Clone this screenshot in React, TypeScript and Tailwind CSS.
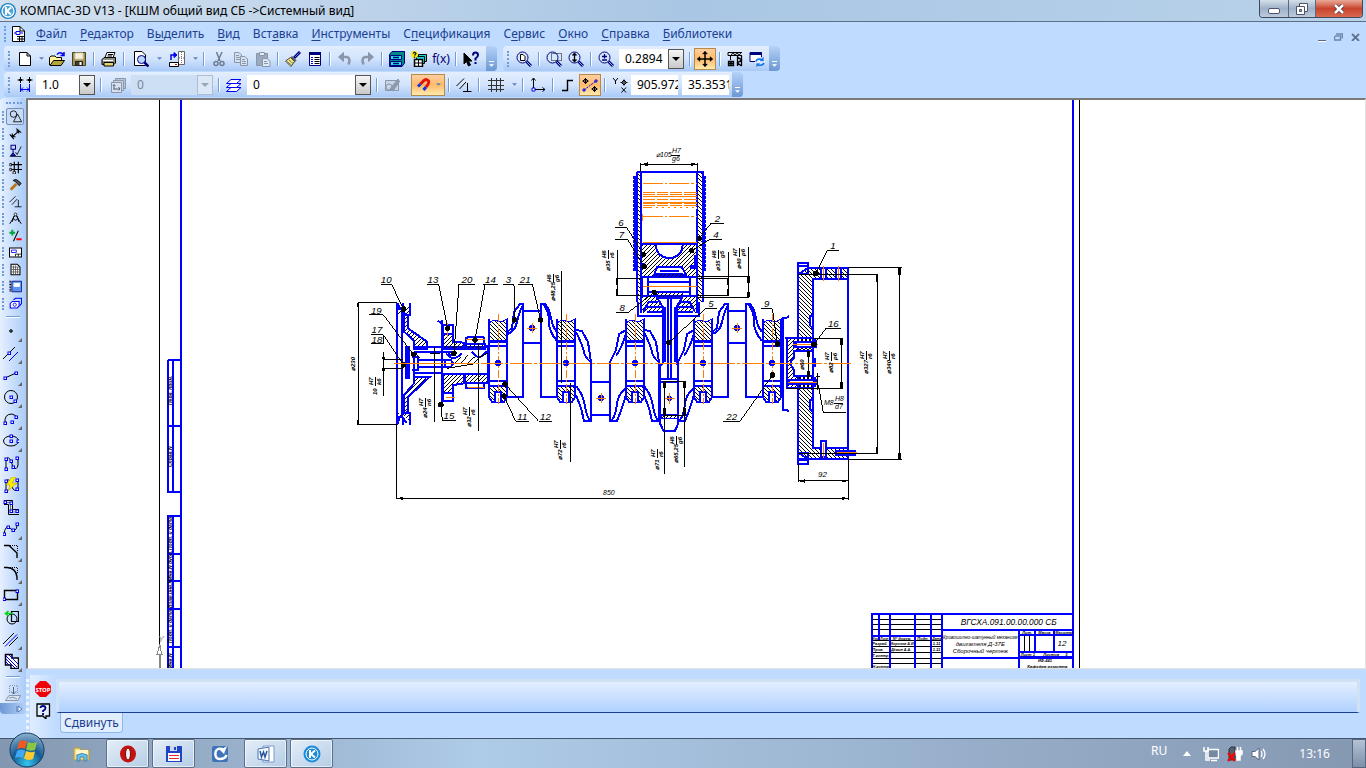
import type { ReactNode } from "react";

/* ---------- icons, all on a 16x16 grid ---------- */

type LineProps = { d: string; c?: string; f?: string; w?: number; dash?: string };

function L({ d, c = "#000", f = "none", w = 1, dash }: LineProps) {
  return <path d={d} stroke={c} fill={f} strokeWidth={w} strokeDasharray={dash} />;
}

const BLUE = "#0000f0";
const NAVY = "#00007c";
const GRAY = "#8a97ab";

const lens = (
  <>
    <L d="M10.5 10.5L15 15" c={NAVY} w={3} />
    <L d="M11 11L15 15" c="#8ab4f0" w={1} />
    <circle cx="6.5" cy="6.5" r="5.5" fill="#d6e8ff" stroke={NAVY} />
  </>
);

const node = (x: number, y: number) => (
  <rect key={`${x}-${y}`} x={x - 1} y={y - 1} width="2.5" height="2.5" fill="#fff" stroke={BLUE} />
);

const icons: Record<string, ReactNode> = {
  compass: (
    <>
      <circle cx="8" cy="8" r="8" fill="#1b7fc4" />
      <circle cx="8" cy="8" r="6" fill="#4aa8e0" stroke="#fff" strokeWidth="1.3" />
      <L d="M6 4V12M11 4.5L7 8L11 11.5" c="#fff" w={2} />
    </>
  ),
  sheet: (
    <>
      <L d="M2.5.5H10L14.5 5V15.5H2.5Z" f="#fff" />
      <L d="M10 .5V5H14.5M7 10.5H14M7 13H14M9.5 10V15M12 10V15" />
      <L d="M4 7H6M10.5 7H13M6 5.5H10V8.5H6Z" c={BLUE} />
    </>
  ),
  newDoc: <L d="M2.5 1.5H10L13.5 5V14.5H2.5ZM10 1.5V5H13.5" f="#fff" />,
  open: (
    <>
      <L d="M.5 14V6.5L2 5H6L7.5 6.5H12.5V9" f="#fff59a" />
      <L d="M1 14.5L4.5 9.5H15.5L12 14.5Z" f="#b5a63c" />
      <L d="M8 3.5Q11 0 14.5 3.5M15 1V4.5H11.5" c={BLUE} w={1.5} />
    </>
  ),
  save: (
    <>
      <L d="M1.5 1.5H14.5V14.5H1.5Z" f="#a5935a" c="#4a4127" />
      <L d="M4 2H12V8H4Z" f="#f6f2de" c="#d8cfa6" />
      <L d="M4.5 10.5H11.5V14.5H4.5Z" f="#443c28" c="#222" />
      <L d="M9.5 11V14" c="#fff" w={2} />
    </>
  ),
  print: (
    <>
      <L d="M4 6.5L6 1.5H14L12 6.5Z" f="#fff" />
      <L d="M7 3.5H12M6.5 5H11" />
      <L d="M1 8.5L3 6.5H14.5V12L13 13.5H1Z" f="#8c8c80" />
      <L d="M3 11.5H12.5V15H3Z" f="#e6d66a" />
      <L d="M2 9.5H12" c="#fff" />
    </>
  ),
  preview: (
    <>
      <L d="M1.5 .5H9L12.5 4V14.5H1.5Z" f="#fff" />
      <L d="M11 11L15.5 15.5" c={NAVY} w={2.5} />
      <circle cx="8.5" cy="8.5" r="4" fill="#bcd8ff" stroke={NAVY} />
    </>
  ),
  convert: (
    <>
      <L d="M9.5.5H15.5V13.5H9.5Z" f="#fff" c="#666" />
      <L d="M12.5 1V13M10 7H15" c="#777" dash="1 1" />
      <L d="M.5 11.5H9.5V15.5H.5Z" f="#fff" />
      <L d="M2 9V4H6" c={BLUE} w={1.5} />
      <L d="M5 1.5L8 4L5 6.5Z" c={BLUE} f={BLUE} />
      <L d="M6 13.5H8" c="#e00" />
    </>
  ),
  cut: (
    <>
      <L d="M5.5 1L9 10M11 1L7 10" c="#6e7c92" w={1.5} />
      <circle cx="5" cy="12.5" r="2" fill="none" stroke="#6e7c92" strokeWidth="1.5" />
      <circle cx="11" cy="12.5" r="2" fill="none" stroke="#6e7c92" strokeWidth="1.5" />
    </>
  ),
  copy: (
    <>
      <L d="M1.5 1.5H6L8.5 4V11.5H1.5Z" c={GRAY} f="#d5e0f0" />
      <L d="M3 4.5H6M3 6.5H7M3 8.5H7" c={GRAY} />
      <L d="M7.5 5.5H12L14.5 8V14.5H7.5Z" c={GRAY} f="#d5e0f0" />
      <L d="M9 8.5H12M9 10.5H13M9 12.5H13" c={GRAY} />
    </>
  ),
  paste: (
    <>
      <L d="M1.5 2.5H12.5V14.5H1.5Z" c={GRAY} f="#9aa9bf" />
      <L d="M4.5 1.5H9.5V4.5H4.5Z" c={GRAY} f="#e5edf8" />
      <L d="M7.5 7.5H12L15 10V15.5H7.5Z" c={GRAY} f="#dfe9f6" />
      <L d="M9 10.5H12M9 12.5H13" c={GRAY} />
    </>
  ),
  brush: (
    <>
      <L d="M9 7L15 1" c={NAVY} w={3} />
      <L d="M10 6L14.5 1.5" c="#3f7be0" w={1} />
      <L d="M6 6L10.5 10.5" c="#606060" w={3} />
      <L d="M5.5 6.5L.5 10L6 15.5L9.5 10.5Z" f="#f4e97a" c="#444" />
      <L d="M2 10.5L6.5 14M4 9L8 12.5" c="#777" />
    </>
  ),
  list: (
    <>
      <L d="M2.5 1.5H13.5V14.5H2.5Z" f="#fff" c={NAVY} />
      <L d="M2 2.5H14" c={NAVY} w={3} />
      <L d="M4 6.5H6M4 8.5H6M4 10.5H6M4 12.5H6" c={BLUE} />
      <L d="M7.5 6.5H12.5M7.5 8.5H12.5M7.5 10.5H12.5M7.5 12.5H12.5" />
    </>
  ),
  undo: (
    <>
      <L d="M5 6H10Q14 7 11.5 13.5" c={GRAY} w={2.5} />
      <L d="M6.5 1.5V10.5L1.5 6Z" c={GRAY} f={GRAY} />
    </>
  ),
  redo: (
    <>
      <L d="M11 6H6Q2 7 4.5 13.5" c={GRAY} w={2.5} />
      <L d="M9.5 1.5V10.5L14.5 6Z" c={GRAY} f={GRAY} />
    </>
  ),
  cabinet: (
    <>
      <L d="M.5 3.5L3 .5H15.5V12L13 15.5H.5Z" f="#008b8b" c={NAVY} />
      <L d="M1.5 4.5H12.5V8.5H1.5ZM1.5 10.5H12.5V14.5H1.5Z" f="#22e5e5" c={NAVY} />
      <L d="M4 6.5H10M4 12.5H10" c={NAVY} w={1.5} />
    </>
  ),
  vars: (
    <>
      <L d="M7.5 3.5H15.5V10.5H7.5Z" f="#20d8d8" />
      <L d="M5.5 5.5H13.5V12.5H5.5Z" f="#20d8d8" />
      <L d="M3.5 8.5H11.5V15.5H3.5Z" f="#fff" w={1.5} />
      <L d="M3.5 12H11.5M7.5 8.5V15.5" />
      <circle cx="3.5" cy="3.5" r="3.5" fill="#ffee00" />
      <L d="M2 2.5Q3.5 0 5 2.5L3.5 4.5M3.5 5.5V7" c="#222" w={1.3} />
    </>
  ),
  cursorHelp: (
    <>
      <L d="M1 2V13L3.5 10.5L5.5 15L7.5 14L5.5 10H9Z" f="#000" />
      <L d="M10 4.5Q10 1.5 12.5 1.5Q15 1.5 15 4Q15 6 12.5 7.5V9.5M12.5 11V13" c={NAVY} w={2} />
    </>
  ),
  zoomPage: (
    <>
      {lens}
      <L d="M4.5 3.5H7L9 5.5V9.5H4.5Z" f="#fff" />
    </>
  ),
  zoomWin: (
    <>
      {lens}
      <L d="M5.5 2.5H15.5V9.5H5.5Z" dash="1 1" />
    </>
  ),
  zoomMove: (
    <>
      {lens}
      <L d="M6.5 2.5V10.5M4.5 4.5L6.5 2.5L8.5 4.5M4.5 8.5L6.5 10.5L8.5 8.5" w={1.3} />
    </>
  ),
  zoomScale: (
    <>
      {lens}
      <L d="M6.5 3V7.5M4 5.5H9M4 9H9" c={NAVY} w={1.3} />
    </>
  ),
  pan: (
    <>
      <L d="M8 1V15M1 8H15" w={1.5} />
      <L
        d="M8 0L5.5 3H10.5ZM8 16L5.5 13H10.5ZM0 8L3 5.5V10.5ZM16 8L13 5.5V10.5Z"
        f="#000"
        w={0.3}
      />
    </>
  ),
  crane: (
    <>
      <L d="M1 1.5H15M1 4.5H15M1 1.5V4.5M4 4.5L6 1.5L8 4.5L10 1.5L12 4.5L14 1.5M3.5 5V9" />
      <L d="M10.5 5V15M14.5 5V15M10.5 6L14.5 9L10.5 12L14.5 15" w={1.3} />
      <L d="M1.5 10.5H6.5V14.5H1.5ZM1.5 12.5H6.5M4 10.5V14.5" w={1.3} />
    </>
  ),
  refresh: (
    <>
      <L d="M1 1.5H12.5V10.5H1Z" f="#fff" c={NAVY} />
      <L d="M1 2.5H12.5" c={NAVY} w={3} />
      <circle cx="11" cy="11" r="5" fill="#dfeaff" />
      <L d="M7 10.5Q8 7 13 8.5M15 12Q13 15.5 9 14" c="#1676e8" w={1.8} />
      <L d="M14.5 6V10H11ZM7.5 16V12.5H11Z" c="#1676e8" f="#1676e8" w={0.3} />
    </>
  ),
  dimStep: (
    <>
      <L d="M3.5 0V6M.5 3H6.5M12.5 0V6M9.5 3H15.5M2 3L3.5 1.5L5 3L3.5 4.5ZM11 3L12.5 1.5L14 3L12.5 4.5Z" />
      <L d="M3.5 7V15M12.5 7V15M4 12.5H12M6 10.5L4 12.5L6 14.5M10 10.5L12 12.5L10 14.5" c={BLUE} />
    </>
  ),
  stateOff: (
    <>
      <L d="M5.5 1.5H15.5V11.5H5.5Z" c={GRAY} f="#b8c5d8" />
      <L d="M3.5 3.5H13.5V13.5H3.5Z" c={GRAY} f="#c8d4e4" />
      <L d="M1.5 5.5H11.5V15.5H1.5Z" c={GRAY} f="#d6e0ee" />
      <L d="M4 13V8M4 12H10M3 9L4 7.5L5.5 9M8.5 10L10 12L8.5 13.5" c="#56657c" />
    </>
  ),
  layers: (
    <>
      <L d="M.5 14.5L5 10.5H15L10.5 14.5Z" f="#fff" c={BLUE} />
      <L d="M.5 10.5L5 6.5H15L10.5 10.5Z" f="#fff" c={BLUE} />
      <L d="M.5 6.5L5 2.5H15L10.5 6.5Z" f="#fff" c={BLUE} />
    </>
  ),
  editOff: (
    <>
      <L d="M1.5 3.5H14.5V13.5H1.5Z" c={GRAY} f="#c9d6e8" />
      <circle cx="5" cy="10" r="3" fill="none" stroke={GRAY} />
      <L d="M6 12L14 2L15.5 4.5L9 14Z" c={GRAY} f="#8d9aae" />
    </>
  ),
  magnet: (
    <>
      <L d="M4.500 7L8 3.500Q11 1.500 12.500 4Q13.500 6 10 10" c="#e3120b" w={3} />
      <L d="M4.500 7L2 9.500M10 10L7.500 13" c="#1238e0" w={3} />
    </>
  ),
  parallel: <L d="M.5 9L8 1.5M3.5 12L10 5M11.5 6V14.5M7 14.5H15.5" />,
  grid: <L d="M3.5 1V15M8.5 1V15M12.5 1V15M0 3.5H16M0 8.5H16M0 12.5H16" c="#333" />,
  axes: (
    <>
      <L d="M3.5 1V12.5H15M1.5 3.5L3.5 1L5.5 3.5M12.5 10.5L15 12.5L12.5 14.5" />
      <L d="M2 11H5V14H2Z" c={BLUE} f="#fff" />
    </>
  ),
  ortho: <L d="M2 13.5H7.5V3.5H13" w={1.4} />,
  snap: (
    <>
      <L d="M3.5 1V7M.5 4H6.5M12.5 9V15M9.5 12H15.5M1 4L3.5 1.5L6 4L3.5 6.5ZM10 12L12.5 9.5L15 12L12.5 14.5Z" />
      <L d="M2 13L14 4" c={BLUE} dash="2 1" />
      <L d="M1 12H3V14H1ZM13 3H15V5H13Z" c={BLUE} />
    </>
  ),
  xy: (
    <>
      <L d="M1 1L3.5 4L6 1M3.5 4V7M8.5 5.5H15.5M12 2.5V8.5" />
      <L d="M9.5 5.5L12 3L14.5 5.5L12 8Z" f="#555" />
      <L d="M9.5 10.5L14 15.5M14 10.5L9.5 15.5" />
    </>
  ),
  geometry: (
    <>
      <circle cx="5.5" cy="5" r="4" fill="none" stroke="#000" />
      <L d="M10.5 5L15.5 14.5H5.5Z" />
    </>
  ),
  dims: <L d="M1 9L6 15M9 2L15 7M4 12L12 5M4 8V12H8M9 5H12V8" w={1.3} />,
  marks: (
    <>
      <L d="M2.5 1.5H8V6.5H2.5ZM5 6.5V13M2.5 14H7.5L5 11Z" c={NAVY} w={1.3} />
      <L d="M8 10L10 13L15 3M1 15.5H15" />
    </>
  ),
  build: (
    <>
      <L d="M6.5 1V15M11.5 1V15M3 4.5H16M3 10.5H16" w={1.4} />
      <L d="M1 3H3V6H1ZM1 9H3V12H1ZM5 13H8V16H5Z" f="#fff" />
    </>
  ),
  hammer: (
    <>
      <L d="M2 14.5L9 7.5" c="#b77417" w={3.5} />
      <L d="M5 3Q9 0 12 4L15 6.5L12.5 9.5L8 4.5Z" f="#555" />
    </>
  ),
  dividers: (
    <>
      <L d="M8 3L1 14.5M8 3L15 14.5M5 8Q8 12 11 8M6 5L4 12M10 5L12 12" w={1.2} />
      <circle cx="8" cy="3" r="1.7" fill="#fff" stroke="#000" />
    </>
  ),
  plusMinus: (
    <>
      <L d="M4 1V8M.5 4.5H7.5" c="#00a63c" w={2.4} />
      <L d="M11.5 2L5.5 15" w={1.3} />
      <L d="M9 12.5H15.5" c="#f00" w={2.4} />
    </>
  ),
  specA: (
    <>
      <L d="M.5 2.5H15.5V13.5H.5Z" f="#fff" w={1.4} />
      <L d="M3 5H9V8H3Z" c={BLUE} />
      <L d="M8 13V10H15M11.5 10V13" />
    </>
  ),
  specB: (
    <>
      <L d="M2.5 1.5H10L13.5 5V14.5H2.5Z" f="#fff" w={1.3} />
      <L d="M5.5 3V14M8 3V14M10.5 5V14M3 5H13M3 8H13M3 11H13" c="#555" />
    </>
  ),
  specC: (
    <>
      <L d="M3.5 1.5H15.5V14.5H3.5Z" f="#5d94f0" c={NAVY} />
      <L d="M6 4H13V8H6Z" f="#fff" c="#fff" />
      <L d="M1.5 1V15" w={2} dash="1 1" />
    </>
  ),
  fragment: (
    <>
      <L d="M5.5 3.5L8 1.5H15.5V8L13 11" c={BLUE} w={1.3} />
      <L d="M1.5 8L4 5.5H12.5V11L10 13.5H1.5Z" c={BLUE} f="#fff" w={1.3} />
      <circle cx="7" cy="9.5" r="2" fill="none" stroke={BLUE} />
    </>
  ),
  point: <circle cx="8" cy="8" r="1.3" fill="#777" stroke="#000" />,
  lineTool: (
    <>
      <L d="M0 14L12 2" />
      <L d="M6 16L15 7" c={BLUE} />
      {node(6, 8)}
    </>
  ),
  segment: (
    <>
      <L d="M2 11L13 6" />
      {node(2, 11)}
      {node(13, 6)}
    </>
  ),
  circle: (
    <>
      <circle cx="8" cy="8" r="6.5" fill="none" stroke="#000" />
      {node(8, 8)}
      {node(12, 12)}
    </>
  ),
  arc: (
    <>
      <L d="M2 12Q1 3 9 3Q13 4 14 7" />
      {node(2, 12)}
      {node(13, 6)}
      {node(9, 11)}
    </>
  ),
  ellipse: (
    <>
      <ellipse cx="8" cy="8" rx="7.5" ry="5" fill="none" stroke="#000" />
      {node(8, 8)}
      {node(8, 3)}
      {node(15, 8)}
    </>
  ),
  bezier: (
    <>
      <L d="M3 14V5Q5 0 8 6L10 12Q14 16 15 10V3" />
      {[node(3, 14), node(3, 4), node(8, 6), node(14, 3), node(10, 12)]}
    </>
  ),
  bolt: (
    <>
      <L d="M3 14V5Q5 0 8 6L10 12Q14 16 15 10V3" />
      {[node(3, 14), node(3, 4), node(14, 3), node(14, 12)]}
      <L d="M9 0L3 8H7L5 14L14 6H9L13 0Z" f="#ffee00" c="#b79b00" w={0.6} />
    </>
  ),
  polyline: (
    <>
      <L d="M1 1.5H9.5V10.5H16M1 5.5H5.5V15.5H16" />
      <L d="M2 3.5H7.5V13H15" c="#777" />
      {[node(2, 3), node(8, 4), node(8, 12), node(14, 12)]}
    </>
  ),
  spline: (
    <>
      <L d="M1 13Q2 5 6 6Q9 10 12 9Q14 8 14 4" />
      {[node(1, 13), node(5, 6), node(10, 9), node(14, 3)]}
    </>
  ),
  chamfer: (
    <>
      <L d="M1 2.5H6L14 10V15" w={1.4} />
      <L d="M7 2.5H14.5V9" dash="1 1" />
    </>
  ),
  fillet: (
    <>
      <L d="M1 2.5H4Q13 3 14 12V15" w={1.4} />
      <L d="M7 2.5H14.5V9" dash="1 1" />
    </>
  ),
  rectangle: (
    <>
      <L d="M1.5 3.5H14.5V12.5H1.5Z" w={1.4} />
      {node(1, 12)}
      {node(14, 4)}
    </>
  ),
  contour: (
    <>
      <L d="M8.5 2.5H15.5V12.5H8.5Z" w={1.2} />
      <circle cx="9" cy="10" r="5" fill="none" stroke="#000" />
      <L d="M10 4.5H3M5.5 2L2.5 4.5L5.5 7" c="#00d31b" w={1.6} />
    </>
  ),
  hatchLines: (
    <>
      <L d="M0 13L11 2M6 15L15 6" />
      <L d="M2 15.5L14 3.5" c={BLUE} />
    </>
  ),
  hatch: (
    <>
      <L d="M2.5 1.5H9V5H15.5V15.5H8V12H2.5Z" f="#fff" w={1.5} />
      <L d="M3 3L14 14M6 2L15 11M3 6L12 15M3 9L6 12" c={BLUE} />
    </>
  ),
  solidOff: (
    <>
      <L d="M4.5 8V.5H12.5V8" c={GRAY} dash="1 1" />
      <L d="M8.5 2V9M6 6.5L8.5 9L11 6.5" c="#56657c" />
      <L d="M.5 15.5L4 10.5H15.5L13 15.5ZM4 13Q8 11 12 14" c={GRAY} f="#d9e4f3" />
    </>
  ),
  stop: (
    <>
      <L d="M5 0H11L16 5V11L11 16H5L0 11V5Z" f="#f00008" c="none" />
      <text x="8" y="10.5" textAnchor="middle" className="fill-white text-[6px] font-bold">
        STOP
      </text>
    </>
  ),
  ask: (
    <>
      <L d="M2 1H14.5V13H11V16L8 13H2Z" f="#e6f1ff" w={1.3} />
      <L d="M5.5 5Q5.5 3 8 3Q10.5 3 10.5 5Q10.5 6.500 8 8V9M8 10V12" c={NAVY} w={1.8} />
    </>
  ),
};

function Icon({ name, className = "size-4" }: { name: string; className?: string }) {
  return (
    <svg viewBox="0 0 16 16" className={`${className} shrink-0`} aria-hidden="true">
      {icons[name]}
    </svg>
  );
}

/* ---------- toolbar parts ---------- */

function Tool({ icon, title }: { icon: string; title: string }) {
  return (
    <button type="button" title={title} className="flex h-6 w-[22px] shrink-0 items-center justify-center">
      <Icon name={icon} />
    </button>
  );
}

function WideTool({ icon, title }: { icon: string; title: string }) {
  return (
    <button type="button" title={title} className="flex h-6 w-[26px] shrink-0 items-center justify-center">
      <Icon name={icon} />
    </button>
  );
}

function ActiveTool({ icon, title, arrow = false }: { icon: string; title: string; arrow?: boolean }) {
  return (
    <button
      type="button"
      title={title}
      className={`flex h-[22px] shrink-0 items-center justify-center gap-1 border border-[#b58a4c] bg-linear-to-b from-[#ffcf9e] via-[#ffba68] to-[#ffeaae] ${arrow ? "w-[34px]" : "w-[22px]"}`}
    >
      <Icon name={icon} />
      {arrow && <Caret />}
    </button>
  );
}

function Caret() {
  return (
    <svg viewBox="0 0 6 3" className="h-[3px] w-[5px] shrink-0" aria-hidden="true">
      <path d="M0 0H6L3 3Z" fill="#5d82b8" />
    </svg>
  );
}

function Drop() {
  return (
    <span className="flex w-2.5 shrink-0 items-center justify-center">
      <Caret />
    </span>
  );
}

function Sep() {
  return (
    <span className="flex w-2 shrink-0 justify-center">
      <span className="h-3.5 w-0.5 border-r border-white bg-[#6f9dd9]" />
    </span>
  );
}

function Grip() {
  return <span className="mx-1 h-4 w-0 shrink-0 border-l-2 border-dotted border-[#6f9dd9]" />;
}

function Cap() {
  return (
    <span className="ml-auto flex w-[11px] shrink-0 flex-col items-center justify-end gap-0.5 self-stretch rounded-r bg-linear-to-b from-[#b5d2f8] to-[#6c98d4] pb-1">
      <span className="h-px w-[5px] bg-white" />
      <svg viewBox="0 0 6 3" className="h-[3px] w-[5px]" aria-hidden="true">
        <path d="M0 0H6L3 3Z" fill="#fff" />
      </svg>
    </span>
  );
}

function Strip({ className, children }: { className: string; children: ReactNode }) {
  return (
    <div
      className={`flex h-[25px] shrink-0 items-center rounded bg-linear-to-b from-[#e3eefe] via-[#d3e4fc] to-[#a9c9f6] ${className}`}
    >
      {children}
    </div>
  );
}

function Combo({ label, value, className, disabled = false }: { label: string; value: string; className: string; disabled?: boolean }) {
  return (
    <label className={`flex h-5 shrink-0 ${disabled ? "bg-[#cddff5] text-[#7d8794]" : "bg-white text-black"} ${className}`}>
      <select
        aria-label={label}
        disabled={disabled}
        className="min-w-0 flex-1 appearance-none pl-1.5 text-[12px] leading-5 outline-none"
      >
        <option>{value}</option>
      </select>
      <span
        className={`flex w-4 items-center justify-center border ${disabled ? "border-[#aebdd0] bg-[#dde8f6]" : "border-[#555] bg-linear-to-b from-[#f6f6f6] to-[#c9c9c9]"}`}
      >
        <svg viewBox="0 0 8 4" className="h-1 w-2" aria-hidden="true">
          <path d="M0 0H8L4 4Z" fill={disabled ? "#9aa7b8" : "#000"} />
        </svg>
      </span>
    </label>
  );
}

const menu = [
  ["", "Ф", "айл"],
  ["", "Р", "едактор"],
  ["В", "ы", "делить"],
  ["", "В", "ид"],
  ["Вст", "а", "вка"],
  ["", "И", "нструменты"],
  ["С", "п", "ецификация"],
  ["С", "е", "рвис"],
  ["", "О", "кно"],
  ["", "С", "правка"],
  ["", "Б", "иблиотеки"],
];

function TitleBar() {
  return (
    <header className="flex h-[22px] shrink-0 items-start justify-between border-b border-[#5d6f86] bg-linear-to-r from-[#d3e1f0] via-[#a9c6e4] to-[#b9d2ea]">
      <div className="flex h-[21px] items-center gap-1 pr-6">
        <Icon name="compass" />
        <h1 className="text-[12px] leading-5 text-black">КОМПАС-3D V13 - [КШМ общий вид СБ -&gt;Системный вид]</h1>
      </div>
      <div className="mr-[3px] flex h-[18px] overflow-hidden rounded-b border border-t-0 border-[#3e4a5a]">
        <button type="button" title="Свернуть" className="flex w-7 items-center justify-center bg-linear-to-b from-[#d5dfea] via-[#9fb2c8] to-[#bccbdc]">
          <span className="mt-1 h-1.5 w-3 rounded-xs border border-[#4b5468] bg-white" />
        </button>
        <button type="button" title="Развернуть" className="flex w-7 items-center justify-center border-x border-[#5d6a7d] bg-linear-to-b from-[#d5dfea] via-[#9fb2c8] to-[#bccbdc]">
          <svg viewBox="0 0 12 12" className="size-3" aria-hidden="true">
            <path d="M3.500.5H11.500V8.500H3.500Z" fill="#fff" stroke="#4b5468" />
            <path d="M.5 3.500H8.500V11.500H.5Z" fill="#fff" stroke="#4b5468" />
            <path d="M3.500 6.500H5.500V8.500H3.500Z" fill="#9fb2c8" stroke="#4b5468" />
          </svg>
        </button>
        <button type="button" title="Закрыть" className="flex w-[46px] items-center justify-center bg-linear-to-b from-[#e9a898] via-[#c8432c] to-[#d9694f]">
          <svg viewBox="0 0 12 10" className="h-2.5 w-3" aria-hidden="true">
            <path d="M2 1L10 9M10 1L2 9" stroke="#4b3038" strokeWidth="4" />
            <path d="M2 1L10 9M10 1L2 9" stroke="#fff" strokeWidth="2.500" />
          </svg>
        </button>
      </div>
    </header>
  );
}

function MenuBar() {
  return (
    <nav className="flex h-6 shrink-0 items-center pr-1.5">
      <Grip />
      <Icon name="sheet" />
      <ul className="ml-2.5 flex gap-[13px] text-[12px] leading-5 text-[#1c3f8f]">
        {menu.map(([a, key, b]) => (
          <li key={a + key + b}>
            <button type="button">
              {a}
              <u className="underline-offset-2">{key}</u>
              {b}
            </button>
          </li>
        ))}
      </ul>
      <div className="ml-auto flex items-center gap-2 pt-1.5">
        <button type="button" title="Свернуть документ" className="flex h-2.5 w-2 items-end">
          <span className="h-0.5 w-2 border-b border-white bg-[#5a6a82]" />
        </button>
        <button type="button" title="Восстановить документ">
          <svg viewBox="0 0 9 8" className="h-2 w-[9px]" aria-hidden="true">
            <path d="M2 1H8.500V5.500M1 3H6.500V7H.500V3" fill="none" stroke="#6f87ab" strokeWidth="1.500" />
          </svg>
        </button>
        <button type="button" title="Закрыть документ">
          <svg viewBox="0 0 9 8" className="h-2 w-[9px]" aria-hidden="true">
            <path d="M1 1L8 8M8 1L1 8" stroke="#5f7391" strokeWidth="1.800" />
          </svg>
        </button>
      </div>
    </nav>
  );
}

function Toolbars() {
  return (
    <div className="flex h-[52px] shrink-0 flex-col gap-px pl-1">
      <div className="flex gap-1.5">
        <Strip className="w-[493px]">
          <Grip />
          <Tool icon="newDoc" title="Новый" />
          <Drop />
          <Tool icon="open" title="Открыть" />
          <Tool icon="save" title="Сохранить" />
          <Sep />
          <Tool icon="print" title="Печать" />
          <Sep />
          <WideTool icon="preview" title="Предварительный просмотр" />
          <Drop />
          <WideTool icon="convert" title="Преобразовать" />
          <Drop />
          <Sep />
          <Tool icon="cut" title="Вырезать" />
          <Tool icon="copy" title="Копировать" />
          <Tool icon="paste" title="Вставить" />
          <Sep />
          <Tool icon="brush" title="Копировать свойства" />
          <Tool icon="list" title="Свойства" />
          <Sep />
          <Tool icon="undo" title="Отменить" />
          <Tool icon="redo" title="Повторить" />
          <Sep />
          <Tool icon="cabinet" title="Менеджер библиотек" />
          <Tool icon="vars" title="Менеджер документа" />
          <button type="button" className="w-[22px] text-[12px] leading-5 text-[#00007c]">
            f(x)
          </button>
          <Sep />
          <Tool icon="cursorHelp" title="Справка" />
          <Cap />
        </Strip>
        <Strip className="w-[277px]">
          <Grip />
          <Tool icon="zoomPage" title="Показать все" />
          <Sep />
          <Tool icon="zoomWin" title="Увеличить рамкой" />
          <Tool icon="zoomMove" title="Приблизить" />
          <Sep />
          <Tool icon="zoomScale" title="Масштаб" />
          <Combo label="Текущий масштаб" value="0.2894" className="mx-0.5 w-[65px]" />
          <Sep />
          <ActiveTool icon="pan" title="Сдвинуть" />
          <Sep />
          <Tool icon="crane" title="Перестроить" />
          <Tool icon="refresh" title="Обновить изображение" />
          <Cap />
        </Strip>
      </div>
      <Strip className="w-[739px]">
        <Grip />
        <Tool icon="dimStep" title="Шаг курсора" />
        <Combo label="Текущий шаг курсора" value="1.0" className="mr-0.5 w-[59px]" />
        <Sep />
        <WideTool icon="stateOff" title="Состояния видов" />
        <Combo label="Вид" value="0" disabled className="mr-0.5 w-[82px]" />
        <Sep />
        <Tool icon="layers" title="Слои" />
        <Combo label="Слой" value="0" className="mx-0.5 w-[124px]" />
        <Sep />
        <Tool icon="editOff" title="Редактировать" />
        <span className="w-2 shrink-0" />
        <ActiveTool icon="magnet" title="Привязки" arrow />
        <Sep />
        <Tool icon="parallel" title="Параметрический режим" />
        <Sep />
        <WideTool icon="grid" title="Сетка" />
        <Drop />
        <Sep />
        <Tool icon="axes" title="Локальная СК" />
        <Sep />
        <Tool icon="ortho" title="Ортогональное черчение" />
        <ActiveTool icon="snap" title="Округление" />
        <Sep />
        <Tool icon="xy" title="Координаты" />
        <input
          aria-label="Координата X"
          defaultValue="905.9727"
          className="mr-1 h-5 w-[47px] shrink-0 bg-white pl-1.5 text-[12px] leading-5"
        />
        <input
          aria-label="Координата Y"
          defaultValue="35.3531"
          className="h-5 w-[47px] shrink-0 bg-white pl-1.5 text-[12px] leading-5"
        />
        <Cap />
      </Strip>
    </div>
  );
}

const panels = [
  ["geometry", "Геометрия"],
  ["dims", "Размеры"],
  ["marks", "Обозначения"],
  ["build", "Обозначения для строительства"],
  ["hammer", "Редактирование"],
  ["parallel", "Параметризация"],
  ["dividers", "Измерения"],
  ["plusMinus", "Выделение"],
  ["specA", "Виды"],
  ["specB", "Спецификация"],
  ["specC", "Отчеты"],
  ["fragment", "Вставки и макроэлементы"],
];

const geometryTools = [
  ["point", "Точка"],
  ["lineTool", "Вспомогательная прямая"],
  ["segment", "Отрезок"],
  ["circle", "Окружность"],
  ["arc", "Дуга"],
  ["ellipse", "Эллипс"],
  ["bezier", "Непрерывный ввод объектов"],
  ["bolt", "Автолиния"],
  ["polyline", "Мультилиния"],
  ["spline", "Сплайн"],
  ["chamfer", "Фаска"],
  ["fillet", "Скругление"],
  ["rectangle", "Прямоугольник"],
  ["contour", "Собрать контур"],
  ["hatchLines", "Эквидистанта"],
  ["hatch", "Штриховка"],
];

const noCorner = ["bezier", "bolt", "polyline", "contour"];

function SideBar() {
  return (
    <aside className="mb-6 flex w-[26px] shrink-0 flex-col overflow-hidden rounded bg-linear-to-r from-[#e6f0ff] to-[#aacbf8]">
      <span className="mt-1 ml-1.5 w-4 shrink-0 border-t-2 border-dotted border-[#6f9dd9]" />
      <div className="mt-1 flex flex-col">
        {panels.map(([icon, title], i) => (
          <div key={icon} className="flex h-[17px] items-center">
            <span className="ml-0.5 h-3 w-1 shrink-0 border-l-2 border-dotted border-[#6f9dd9]" />
            <button
              type="button"
              title={title}
              className={`flex h-[17px] w-[18px] items-center justify-center ${i === 0 ? "rounded-xs border border-[#7590b4] bg-[#c6dbf5]" : ""}`}
            >
              <Icon name={icon} className="size-[13px]" />
            </button>
          </div>
        ))}
      </div>
      <span className="mx-1.5 mt-1 mb-0.5 h-0.5 shrink-0 border-b border-white bg-[#6f9dd9]" />
      <div className="flex flex-col">
        {geometryTools.map(([icon, title]) => (
          <button key={icon} type="button" title={title} className="flex h-[22px] items-center pl-[3px]">
            <Icon name={icon} />
            {!noCorner.includes(icon) && (
              <svg viewBox="0 0 4 4" className="-ml-px size-1 self-end" aria-hidden="true">
                <path d="M4 0V4H0Z" fill="#666" />
              </svg>
            )}
          </button>
        ))}
      </div>
      <span className="mx-1.5 my-1 h-0.5 shrink-0 border-b border-white bg-[#6f9dd9]" />
      <button type="button" title="Сечение" className="flex h-6 items-center justify-center">
        <Icon name="solidOff" />
      </button>
      <span className="mt-auto flex h-3 items-center justify-end bg-linear-to-r from-[#6c98d4] to-[#b5d2f8] pr-1">
        <svg viewBox="0 0 6 6" className="size-1.5" aria-hidden="true">
          <path d="M0 0V6M2 0L6 3L2 6Z" stroke="#4d77b3" fill="#fff" />
        </svg>
      </span>
    </aside>
  );
}

/* ---------- the drawing ---------- */

function Blue({ d, fill = "none" }: { d: string; fill?: string }) {
  return <path d={d} fill={fill} stroke="#00f" strokeWidth="6" />;
}

function Thin({ d }: { d: string }) {
  return <path d={d} fill="none" stroke="#000" strokeWidth="3" />;
}

function Orange({ d }: { d: string }) {
  return <path d={d} fill="none" stroke="#ff8000" strokeWidth="3" />;
}

const H = "url(#hatch)";
const HW = "url(#hatchWide)";
const HB = "url(#hatchBack)";

// leader: number over a shelf, with a line going to a dot on the part
function Callout({ n, x, y, w, at }: { n: string; x: number; y: number; w: number; at: [number, number, number] }) {
  const [from, tx, ty] = at;
  return (
    <g>
      <Thin d={`M${x} ${y}H${x + w}M${from} ${y}L${tx} ${ty}`} />
      <circle cx={tx} cy={ty} r="8" />
      <text x={x + w / 2} y={y - 4} textAnchor="middle" fontSize="29">
        {n}
      </text>
    </g>
  );
}

// fit dimension: main size, then upper and lower tolerance
function Fit({ x, y, w, size, up, low, flat = false }: { x: number; y: number; w: number; size: string; up?: string; low?: string; flat?: boolean }) {
  return (
    <g transform={`translate(${x} ${y})${flat ? "" : " rotate(-90)"}`} fontSize={flat ? 7 : 6} fontWeight={flat ? 400 : 700}>
      <text>{size}</text>
      {up && <path d={`M${w} -2H${w + 9}`} stroke="#000" />}
      {up && (
        <text x={w + 1} y={-4}>
          {up}
        </text>
      )}
      {low && (
        <text x={w + 1} y={4}>
          {low}
        </text>
      )}
    </g>
  );
}

function Bearing({ x }: { x: number }) {
  return (
    <g transform={`translate(${x} 0)`}>
      <path d="M-9 323L-4 320L3 322L9 319V342H-9Z" fill={HB} stroke="#00f" strokeWidth="1" />
      <path d="M-9 386H9V397L6 402H-6L-9 397Z" fill={HB} stroke="#00f" strokeWidth="2" />
      <path d="M-9 319V398M9 319V398M-9 341H9M-9 346H9M-9 381H9M-9 386H9" fill="none" stroke="#00f" strokeWidth="2" />
      <path d="M-3 402V392H3V402" fill="#fff" stroke="#00f" strokeWidth="2" />
      <path d="M0 314V404" stroke="#ff8000" strokeDasharray="8 2 2 2" />
      <circle cy="363" r="3" fill="#00f" />
    </g>
  );
}

// crank throw: pin above or below the axis
function ThrowUp({ x }: { x: number }) {
  return (
    <g transform={`translate(${x} 0)`} fill="none" stroke="#00f" strokeWidth="2">
      <path d="M-25 332L-20 328L-18 312L-12 304H-9V397H-25" />
      <path d="M-25 334Q-17 332 -15 322T-9 305" />
      <path d="M25 332L21 326L17 310L13 304H9V397H25" />
      <path d="M12 305Q17 312 17 322T25 341" />
      <path d="M-9 311H9M-9 343H9" />
      <Cross y={328} />
    </g>
  );
}

function ThrowDown({ x }: { x: number }) {
  return (
    <g transform={`translate(${x} 0)`} fill="none" stroke="#00f" strokeWidth="2">
      <path d="M-25 330L-19 331L-13 342L-10 362V421H-17L-20 408L-25 395" />
      <path d="M-25 332Q-18 346 -17 352T-10 362M-25 386Q-18 394 -16 406T-11 420" />
      <path d="M25 330L18 334L15 350L9 362V421H16L21 408L25 395" />
      <path d="M25 334Q19 352 15 355M25 388Q17 394 16 404T11 420" />
      <path d="M-10 382H9M-10 415H9" />
      <Cross y={398} />
    </g>
  );
}

function Cross({ y }: { y: number }) {
  return (
    <>
      <circle cy={y} r="2.500" fill="#00f" stroke="#00f" strokeWidth="1" />
      <path d={`M-5 ${y}H5M0 ${y - 5}V${y + 5}`} stroke="#ff8000" strokeWidth="1" />
    </>
  );
}

const fins = Array.from({ length: 24 }, (_, i) => 108 + i * 12);

function Drawing() {
  return (
    <svg
      viewBox="28 100 1337 568"
      preserveAspectRatio="xMinYMin slice"
      className="size-full"
      shapeRendering="crispEdges"
      fontFamily="Liberation Sans, sans-serif"
      fontStyle="italic"
      role="img"
      aria-label="КШМ общий вид"
    >
      <defs>
        <pattern id="hatch" width="12" height="12" patternUnits="userSpaceOnUse">
          <path d="M0 12L12 0" stroke="#000" strokeWidth="3" />
        </pattern>
        <pattern id="hatchWide" width="12" height="12" patternUnits="userSpaceOnUse">
          <path d="M0 0L12 12" stroke="#000" strokeWidth="3" />
        </pattern>
        <pattern id="hatchBack" width="4" height="4" patternUnits="userSpaceOnUse">
          <path d="M0 0L4 4" stroke="#000" />
        </pattern>
      </defs>

      {/* sheet frame */}
      <path d="M159.500 100V669M1079.500 100V669" stroke="#000" />
      <path
        d="M181 100V669M1073 100V669M168 669V516H181M168 360V492H181M168 360H181M173 360V492M173 516V669M168 426H181M168 554H181M168 581H181M168 609H181M168 647H181"
        fill="none"
        stroke="#00f"
        strokeWidth="2"
      />
      <g fontSize="5" fontWeight="700">
        <text transform="translate(172 405) rotate(-90)">Перв. прим.</text>
        <text transform="translate(172 467) rotate(-90)">Справ.N</text>
        <text transform="translate(172 550) rotate(-90)">Подп. и дата</text>
        <text transform="translate(172 580) rotate(-90)">Инв.N дубл.</text>
        <text transform="translate(172 608) rotate(-90)">Взам.инв.N</text>
        <text transform="translate(172 643) rotate(-90)">Подп. и дата</text>
        <text transform="translate(172 668) rotate(-90)">Инв.N</text>
      </g>
      <path d="M159.500 645V669" stroke="#888" strokeWidth="2" />
      <path d="M157 654L159.500 646L162 654Z" fill="#fff" stroke="#888" />
      <text x="158" y="642" fontSize="9" fill="#888">
        Y
      </text>

      <ThrowUp x={532} />
      <ThrowUp x={737} />
      <ThrowDown x={601} />
      <ThrowDown x={669} />
      <Bearing x={498} />
      <Bearing x={566} />
      <Bearing x={635} />
      <Bearing x={703} />
      <Bearing x={772} />

      {/* pulley, gears and shaft nose */}
      <g transform="translate(340 260) scale(0.333333)">
        <path d="M175 130L182 150L190 130L198 150L208 130V165H172V148ZM172 475H182L190 462L208 490V460H172Z" fill={H} />
        <Blue d="M170 128V495M186 148V475M172 148H190M172 472H190M172 130L180 145M190 128V145M210 128V165H190M172 492L180 470M190 495V475L200 490M210 495V460H190" />
        <Blue d="M192 160L203 165V205L262 245V268H222V242L192 215ZM192 460L203 455V412L270 350H222V370L192 405Z" fill={H} />
        <Blue d="M208 262V355H198V262ZM222 275H342M222 340H305M222 275V350M222 262H445V275" />
        <Blue d="M235 300H315V322H235ZM315 300H332L340 311L332 322H315M215 290H235V330H215" />
        <path d="M195 262H210V355H195Z" fill="#00f" />
        <Blue d="M305 180V440M294 182L305 190M294 438L305 430M308 195H340V222H308ZM308 400H340V422H308Z" />
        <Blue d="M308 222H338V245L372 248V266H308ZM308 342H372V370L340 375V400H308Z" fill={H} />
        <Blue d="M378 235L385 231H428L432 235V252H378ZM378 368H432V385H378Z" />
        <Blue d="M374 252H436V266H374ZM374 342H445V368H374Z" fill={H} />
        <Blue d="M305 342H445M340 275Q342 292 325 280M318 280Q340 308 365 280M395 275Q420 308 440 272M436 255L445 262V355" />
        <Thin d="M320 325L400 312Q420 285 445 280M345 310L362 292M360 312L385 285M380 312L405 290M228 280L240 295M270 280H300" />
        <Orange d="M323 190V230M318 412H345M378 240H435M383 382H432M215 310H340" />

        <Thin d="M55 128V495M55 128H170M55 495H170M169 495V718M130 275V407M130 298H190M130 325H190M283 262V485M415 250V512M664 33V370M691 370V605" />
        <path d="M52 128L58 142H52ZM52 495L58 480H52ZM125 290H135V298H125ZM125 325H135V333H125Z" />
        <Thin d="M169 715H1524M130 224V252M92 252H130" />
        <path d="M170 715L188 710V720ZM1524 715L1506 710V720Z" />
        <Callout n="10" x={122} y={73} w={33} at={[155, 190, 147]} />
        <Callout n="13" x={262} y={73} w={34} at={[296, 323, 205]} />
        <Callout n="20" x={357} y={73} w={48} at={[357, 342, 280]} />
        <Callout n="14" x={428} y={73} w={47} at={[435, 405, 240]} />
        <Callout n="3" x={488} y={73} w={34} at={[522, 523, 180]} />
        <Callout n="21" x={534} y={73} w={43} at={[577, 602, 180]} />
        <Callout n="19" x={88} y={165} w={42} at={[130, 220, 283]} />
        <Callout n="17" x={92} y={224} w={38} at={[130, 190, 315]} />
        <text x="111" y="249" textAnchor="middle" fontSize="29">
          18
        </text>
        <Callout n="15" x={307} y={481} w={40} at={[307, 303, 434]} />
        <Callout n="11" x={527} y={484} w={40} at={[527, 492, 408]} />
        <Callout n="12" x={596} y={484} w={41} at={[596, 495, 372]} />
      </g>

      {/* cylinder, piston and rod */}
      <g transform="translate(580 140) scale(0.333333)">
        <path d="M185 315H352V410H185ZM185 467H352V518H185Z" fill={H} />
        <path d="M170 97H183V485H170ZM353 97H367V485H353Z" fill={HW} />
        <Blue d="M170 97H368V485M170 97V485M183 97V520M352 97V520M183 312H352" />
        {fins.map((y) => (
          <path key={y} d={`M158 ${y}H170V${y + 8}H158ZM368 ${y}H378V${y + 8}H368Z`} fill="#00f" />
        ))}
        <path d="M162 108H170V392H162ZM368 108H375V392H368Z" fill="#00f" />
        <Blue d="M228 314Q228 350 268 355Q308 350 308 314" fill="#fff" />
        <path d="M183 335H194V352H183ZM183 370H194V387H183ZM342 345H352V388H330V375H342Z" fill="#00f" />
        <Blue d="M232 380H305L318 405H222ZM240 392H298" fill="#fff" />
        <Blue d="M185 412H350V467H185ZM203 425H330V455H203ZM203 412V467M330 412V467" fill="#fff" />
        <Blue d="M175 485V527H358V485M190 515L205 487H235M345 515L330 487H300M200 500H245M290 500H338M200 515H245M290 515H338" />
        <Blue d="M232 475H305L290 500V670L295 680V850L285 872H250L240 850V680L248 670V500Z" fill="#fff" />
        <path d="M248 500H257V665H248ZM281 500H290V665H281Z" fill="#00f" />
        <path d="M230 400H308V412H230ZM230 458H308V474H230ZM243 825H293V835H243Z" fill={H} stroke="#00f" strokeWidth="4" />
        <Blue d="M264 475V715M272 475V715M242 718H295M242 725H295M242 825H293" />
        <circle cx="268" cy="775" r="8" fill="#00f" />
        <Orange d="M252 775H285M268 758V792M188 440H350M188 157H350M188 163H350M188 170H350M188 179H350M188 187H350M188 191H350M188 196H350M188 202H350M188 308H350M187 222V242" />
        <path d="M188 130H350M188 230H350" stroke="#ff8000" strokeWidth="3" strokeDasharray="60 6 8 6" />
        <path d="M228 153V198M268 153V198M308 153V198M215 204H350" stroke="#fff" strokeWidth="6" strokeDasharray="12 6" />

        <Thin d="M183 68V97M352 68V97M183 73H352M112 330V467M445 335V467M505 320V473M112 415H183M112 467H183M352 415H448M352 467H448M352 409H508M352 472H508M253 722V1002M313 722V980M253 724H318M253 826H318" />
        <path d="M183 73L203 67V79ZM352 73L332 67V79ZM109 415H115V435H109ZM109 448H115V467H109ZM442 415H448V435H442ZM442 448H448V467H442ZM501 409H510V428H501ZM501 455H510V472H501ZM310 724H318V745H310ZM310 805H318V826H310ZM250 724H257V745H250ZM250 805H257V826H250Z" />
        <Callout n="2" x={393} y={250} w={38} at={[393, 358, 295]} />
        <Callout n="4" x={390} y={298} w={36} at={[390, 335, 332]} />
        <Callout n="6" x={105} y={262} w={35} at={[140, 190, 343]} />
        <Callout n="7" x={105} y={298} w={38} at={[143, 192, 380]} />
        <Callout n="8" x={108} y={517} w={37} at={[145, 223, 457]} />
        <Callout n="5" x={376} y={506} w={34} at={[376, 266, 608]} />
        <Callout n="22" x={430} y={844} w={50} at={[480, 577, 706]} />
      </g>

      {/* flywheel */}
      <g transform="translate(740 230) scale(0.333333)">
        <Blue d="M175 133L205 113H325V147H218V655H325V688H205L175 668Z" fill={HW} />
        <Blue d="M175 98H205V108H175ZM175 108H205V133H175ZM175 668H205V688H175ZM175 690H205V702H175ZM325 113V688M218 147V655" />
        <Blue d="M243 113H258V147H243ZM288 113H303V147H288Z" fill="#fff" />
        <Blue d="M218 253L209 262V285L218 295ZM218 505L209 515V535L218 545Z" fill="#fff" />
        <Blue d="M135 325H218V475H142V325Z" fill={H} />
        <Blue d="M163 362H218V438H163V420L152 405V395L163 382Z" fill="#fff" />
        <Blue d="M163 336H228V350H163ZM140 450H228V463H140ZM243 632H257V682H243ZM288 662H345V676H288Z" fill="#fff" />
        <path d="M218 328H228V355H218ZM218 385H228V412H218ZM218 440H228V470H218ZM163 336H172V350H163ZM140 450H150V463H140Z" fill="#00f" />
        <Blue d="M147 258L137 265H130V540H137L147 543M128 265V525M218 385V412" />
        <Orange d="M250 108V152M295 108V152M158 343H235M145 457H235M250 640V685M290 669H352" />

        <Thin d="M175 133H415M175 670H415M412 133V670M325 113H485M325 688H485M478 113V688M218 325H308M142 475H308M305 325V475M205 363V440M325 688V810M175 702V757M175 753H325M233 430V480M228 440H240M228 475H240" />
        <path d="M409 133H415V155H409ZM409 650H415V670H409ZM474 113H482V135H474ZM474 668H482V688H474ZM301 325H309V345H301ZM301 455H309V475H301ZM202 363H209V382H202ZM202 422H209V440H202ZM175 753L195 748V758ZM325 753L305 748V758Z" />
        <Callout n="1" x={262} y={61} w={34} at={[262, 228, 130]} />
        <Callout n="16" x={258} y={295} w={44} at={[258, 222, 343]} />
        <Callout n="9" x={63} y={236} w={34} at={[97, 112, 342]} />
        <circle cx="97" cy="435" r="8" />
        <Thin d="M318 547H250L235 465" />
      </g>

      <path d="M394 363.500H853" stroke="#ff8000" strokeDasharray="22 2 3 2" />

      <Fit x={355} y={371} w={0} size="⌀230" />
      <Fit x={377} y={395} w={9} size="10" up="H7" low="k6" />
      <Fit x={427} y={418} w={11} size="⌀24" up="H7" low="n6" />
      <Fit x={471} y={427} w={11} size="⌀32" up="H7" low="r6" />
      <Fit x={555} y={301} w={18} size="⌀48,25" up="H6" low="g6" />
      <Fit x={562} y={460} w={11} size="⌀72" up="H7" low="r6" />
      <Fit x={610} y={271} w={12} size="⌀35" up="H6" low="r6" />
      <Fit x={720} y={271} w={12} size="⌀35" up="H6" low="g5" />
      <Fit x={741} y={269} w={12} size="⌀40" up="H7" low="p6" />
      <Fit x={659} y={470} w={12} size="⌀71" up="H7" low="r6" />
      <Fit x={678} y={463} w={18} size="⌀65,25" up="H6" low="g6" />
      <Fit x={804} y={370} w={0} size="⌀60" />
      <Fit x={833} y={373} w={12} size="⌀82" up="H7" low="p6" />
      <Fit x={868} y={374} w={14} size="⌀327" up="H7" low="r6" />
      <Fit x={891} y={374} w={14} size="⌀340" up="H7" low="r6" />
      <Fit x={656} y={157} w={15} size="⌀105" up="H7" low="g6" flat />
      <Fit x={824} y={405} w={10} size="М8" up="H8" low="d7" flat />
      <text x="603" y="495" fontSize="7">
        850
      </text>
      <text x="818" y="477" fontSize="8">
        92
      </text>

      {/* title block */}
      <g transform="translate(860 605) scale(0.333333)">
        <path d="M33 44H246M33 60H246M33 75H246M33 108H246M33 125H246M33 142H246M33 160H246M33 177H246M57 26V92M494 90V140M510 90V140" stroke="#000" strokeWidth="3" />
        <path
          d="M35 192V28H640M90 28V192M165 28V192M214 28V192M246 28V192M57 28V105M33 92H246M246 74H640M246 158H640M476 74V192M526 74V140M583 74V140M476 90H640M476 140H640M476 156H640"
          fill="none"
          stroke="#00f"
          strokeWidth="6"
        />
        <text x="302" y="60" fontSize="25">
          ВГСХА.091.00.00.000 СБ
        </text>
        <g fontSize="18" textAnchor="middle">
          <text x="361" y="103" fontSize="14">
            Кривошипно-шатунный механизм
          </text>
          <text x="361" y="124">двигателя Д-37Е</text>
          <text x="361" y="145">Сборочный чертеж</text>
          <text x="606" y="122" fontSize="24">
            12
          </text>
        </g>
        <g fontSize="12" fontWeight="700">
          <text x="37" y="104" fontSize="9">
            Изм
          </text>
          <text x="61" y="104" fontSize="9">
            Лист
          </text>
          <text x="98" y="104">N° докум.</text>
          <text x="172" y="104">Подп.</text>
          <text x="217" y="104" fontSize="10">
            Дата
          </text>
          <text x="37" y="121">Разраб.</text>
          <text x="93" y="121" fontSize="11">
            Королев А.И
          </text>
          <text x="37" y="138">Пров.</text>
          <text x="93" y="138" fontSize="11">
            Дёмин А.А.
          </text>
          <text x="37" y="155">Т.контр.</text>
          <text x="37" y="188">Н.контр.</text>
          <text x="218" y="121">1.11</text>
          <text x="218" y="138">1.11</text>
          <text x="487" y="87">Лит.</text>
          <text x="535" y="87">Масса</text>
          <text x="586" y="87" fontSize="11">
            Масштаб
          </text>
          <text x="482" y="153">Лист</text>
          <text x="518" y="153">1</text>
          <text x="550" y="153">Листов</text>
          <text x="616" y="153">3</text>
          <text x="534" y="172">ИФ-441</text>
          <text x="502" y="188" fontSize="13">
            Кафедра ремонта
          </text>
        </g>
      </g>
    </svg>
  );
}

function PropertyPanel() {
  return (
    <section className="flex h-[67px] shrink-0 pt-1 pr-1.5">
      <span className="my-1 w-1 border-l-3 border-dotted border-[#eef5ff]" />
      <div className="flex w-[26px] shrink-0 flex-col items-center gap-1.5 bg-linear-to-r from-[#e1edff] to-[#bfdbff] pt-1.5">
        <button type="button" title="Прервать команду">
          <Icon name="stop" />
        </button>
        <button type="button" title="Справка">
          <Icon name="ask" />
        </button>
      </div>
      <div className="flex min-w-0 flex-1 flex-col items-start pt-1">
        <div className="h-[34px] w-full border-3 border-b border-[#d0e1f4] border-b-[#1c3f8f] bg-linear-to-b from-[#e3efff] to-[#b0d1ff]" />
        <button type="button" className="ml-1 h-5 rounded-b border border-t-0 border-[#8db9ea] bg-[#e1eefe] px-[3px] text-[12px] leading-5 text-[#1c3f8f]">
          Сдвинуть
        </button>
      </div>
    </section>
  );
}

function TaskButton({ title, active = false, children }: { title: string; active?: boolean; children: ReactNode }) {
  return (
    <button
      type="button"
      title={title}
      className={`flex h-[29px] w-[43px] items-center justify-center rounded-xs ${active ? "border border-[#5c708a] bg-linear-to-br from-[#e4eef8] to-[#b5cde6] inset-ring inset-ring-white/60" : ""}`}
    >
      <svg viewBox="0 0 18 18" className="size-[18px]" aria-hidden="true">
        {children}
      </svg>
    </button>
  );
}

function TaskBar() {
  return (
    <footer className="flex h-[30px] shrink-0 items-end border-t border-[#44546b] bg-linear-to-r from-[#8497b0] via-[#aecbe8] via-35% to-[#8598b2]">
      <button type="button" title="Пуск" className="-mt-2 ml-2 flex h-9 w-[38px] items-start justify-center overflow-hidden">
        <svg viewBox="0 0 36 36" className="size-9" aria-hidden="true">
          <defs>
            <radialGradient id="orb" cx="0.5" cy="0.9" r="0.9">
              <stop offset="0" stopColor="#35c6ef" />
              <stop offset="0.5" stopColor="#145a92" />
              <stop offset="1" stopColor="#8fb3cf" />
            </radialGradient>
          </defs>
          <circle cx="18" cy="18" r="17" fill="url(#orb)" stroke="#123a5e" />
          <path d="M10 10Q14 7 18 9.500L16 17Q12 15 8 17.500Z" fill="#ee5a24" />
          <path d="M19 10Q23 12 28 10L26 18Q21 19.500 17 17.500Z" fill="#8cc63f" />
          <path d="M8 19Q12 16.500 16 18.500L14 26Q10 24 6 26Z" fill="#3fa9f5" />
          <path d="M17 19Q21 21 26 19.500L24 27Q19 29 15 26.500Z" fill="#fcc931" />
        </svg>
      </button>
      <div className="ml-3.5 flex gap-[3px]">
        <TaskButton title="Проводник">
          <path d="M1 3H7L8 5H16V15H1Z" fill="#f3dc82" stroke="#b99a3a" />
          <path d="M3 5H15V9H3Z" fill="#fff6c8" />
          <path d="M4 16V10Q9 7 14 10V16H11V12H7V16Z" fill="#6fc2ee" stroke="#3d86b7" />
        </TaskButton>
        <TaskButton title="Opera" active>
          <ellipse cx="9" cy="9" rx="8" ry="8.500" fill="#c4120f" />
          <ellipse cx="9" cy="9" rx="2.500" ry="6" fill="#e8eef5" stroke="#7c0605" />
        </TaskButton>
        <TaskButton title="Total Commander" active>
          <path d="M1 1H17V17H1Z" fill="#1e44c8" />
          <path d="M5 1H12V6H5Z" fill="#cfd8ea" />
          <path d="M9 2H11V5H9Z" fill="#1e44c8" />
          <path d="M3 8H15V16H3Z" fill="#fff" />
          <path d="M4 10.500H14M4 13.500H14" stroke="#e0262a" />
        </TaskButton>
        <TaskButton title="Компас">
          <rect x="1" y="1" width="16" height="16" rx="2" fill="#3f74b8" />
          <path d="M13 4.500Q6 2 4.500 7Q3.500 14 9 14Q14 14 15.500 10" fill="none" stroke="#fff" strokeWidth="2.500" />
          <path d="M16 1L9 5L13 9Z" fill="#fff" />
        </TaskButton>
        <TaskButton title="Word" active>
          <path d="M6 1H17V17H6Z" fill="#fff" stroke="#7d9cc8" />
          <path d="M1 4L12 2V16L1 14Z" fill="#f3f8ff" stroke="#4a74b5" />
          <path d="M3 6L4.500 12L6.500 7L8 12L10 6" fill="none" stroke="#2b579a" strokeWidth="1.500" />
        </TaskButton>
        <TaskButton title="КОМПАС-3D V13" active>
          <circle cx="9" cy="9" r="8.500" fill="#1b8bd8" />
          <circle cx="9" cy="9" r="6" fill="none" stroke="#fff" />
          <path d="M7 5V13M12 5.500L8 9L12 12.500" fill="none" stroke="#fff" strokeWidth="2" />
        </TaskButton>
      </div>
      <div className="ml-auto flex h-[29px] items-center text-[12px] text-white">
        <span className="mr-4 pb-1.5">RU</span>
        <svg viewBox="0 0 8 5" className="mr-3 h-[5px] w-2" aria-hidden="true">
          <path d="M0 5L4 0L8 5Z" fill="#fff" />
        </svg>
        <svg viewBox="0 0 16 16" className="mr-2 size-4" aria-hidden="true">
          <path d="M5 3.500H15.500V12H5ZM8 14.500H14" fill="#7488a2" stroke="#fff" strokeWidth="1.500" />
          <path d="M1 1V5H5V1M3 5V14H7" fill="none" stroke="#fff" strokeWidth="1.500" />
        </svg>
        <svg viewBox="0 0 16 16" className="mr-2 size-4" aria-hidden="true">
          <path d="M2 3L4 1H8V14H2Z" fill="#565f6b" stroke="#2c333d" />
          <path d="M9 5H15V8L13 10V14H10V10L9 8ZM10.500 1V5M13.500 1V5" fill="#fff" stroke="#fff" strokeWidth="1.500" />
          <path d="M1 7L8 15M8 7L1 15" stroke="#f00" strokeWidth="2.200" />
        </svg>
        <svg viewBox="0 0 16 16" className="size-4" aria-hidden="true">
          <path d="M1 5.500H4L8 2V14L4 10.500H1Z" fill="#fff" stroke="#5a6a80" />
          <path d="M10 5Q12 8 10 11M12 3Q16 8 12 13" fill="none" stroke="#fff" strokeWidth="1.300" />
        </svg>
        <time className="mr-[22px] ml-8">13:16</time>
        <button type="button" title="Показать рабочий стол" className="h-full w-[14px] border border-[#55677f] bg-linear-to-b from-[#b4c2d3] to-[#7d90a9]" />
      </div>
    </footer>
  );
}

export default function App() {
  return (
    <div className="flex h-screen flex-col overflow-hidden bg-[#bfdbff] font-['Noto_Sans',sans-serif]">
      <TitleBar />
      <MenuBar />
      <Toolbars />
      <main className="flex min-h-0 flex-1">
        <SideBar />
        <div className="flex min-w-0 flex-1 flex-col">
          <div className="mb-0.5 min-h-0 flex-1 overflow-hidden border-t-2 border-r border-b border-l-2 border-t-[#7a7a7a] border-r-[#e4e4e4] border-b-[#e4e4e4] border-l-[#7a7a7a] bg-white">
            <Drawing />
          </div>
          <PropertyPanel />
        </div>
      </main>
      <TaskBar />
    </div>
  );
}
